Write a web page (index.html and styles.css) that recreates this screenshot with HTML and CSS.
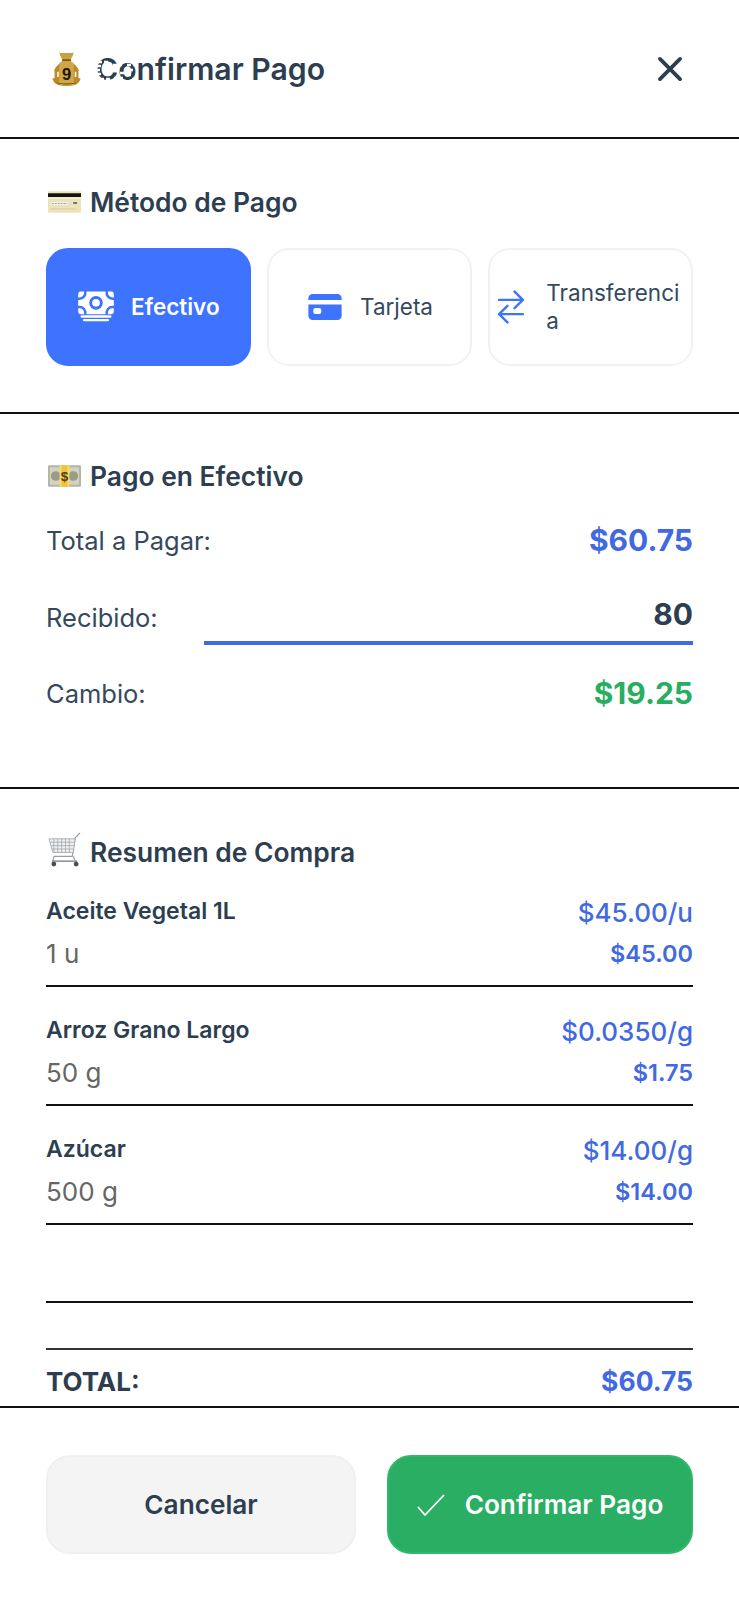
FILE: index.html
```html
<!DOCTYPE html>
<html lang="es">
<head>
    <meta charset="UTF-8">
    <meta name="viewport" content="width=device-width, initial-scale=1.0">
    <title>Confirmar Pago</title>
    <link rel="stylesheet" href="styles.css">
</head>
<body>

    <div class="modal">

        <header class="modal-header">
            <div class="header-title">
                <svg class="bag-emoji" viewBox="0 0 28 34">
                    <path d="M7 1c2 1 4 .4 7 .6 3-.2 5 .4 7-.6-.3 2.500-2 4.500-3 7.500h-8C9 5.500 7.300 3.500 7 1z" fill="#c9a042"/>
                    <path d="M10 7.500h8l.6 2h-9.200z" fill="#7d5a1c"/>
                    <path d="M10 9.500C4.500 13 .5 19 .5 25c0 6 5 8.500 13.500 8.500S27.500 31 27.500 25c0-6-4-12-9.500-15.500z" fill="#bb8a27"/>
                    <path d="M14 10v23" stroke="#e6c565" stroke-width="14" opacity=".5"/>
                    <path d="M4 30c3 2.500 17 2.500 20 0-3 1-17 1-20 0z" fill="#80591a"/>
                    <path d="M0 19h2.500v7H0zM5 20l1.500-.5v5L5 25zM25.500 19H28v7h-2.500zM22 20l1.500-.5v5L22 25z" fill="#fff"/>
                    <text class="bag-sign" x="14" y="28">9</text>
                </svg>
                <h2 class="modal-title">Confirmar Pago<svg class="title-glitch" viewBox="0 0 48 30"><path d="M2 7h11M1 11h5M0 15h4M1 19h5M4 24h11M17 10h9M18 14h3M24 18h4M18 23h9M31 10h8M33 15h5M31 20h4M36 24h5" stroke="#fff" stroke-width="2.500" stroke-dasharray="4 2" fill="none"/></svg></h2>
            </div>
            <svg class="close-icon" viewBox="0 0 512 512">
                <path d="M368 368L144 144M368 144L144 368" fill="none" stroke="currentColor" stroke-linecap="round" stroke-linejoin="round" stroke-width="42"/>
            </svg>
        </header>

        <section class="section method-section">
            <h3 class="section-title">
                <svg class="emoji" viewBox="0 0 34 22">
                    <rect width="34" height="22" fill="#eae3bb"/>
                    <rect y="2" width="34" height="4" fill="#15130c"/>
                    <rect y="6" width="34" height="2" fill="#f6f1d6"/>
                    <rect x="3" y="11" width="18" height="3" fill="#f7f5e8"/>
                    <path d="M4 12.500h16" stroke="#999" stroke-width="1" stroke-dasharray="2 1"/>
                    <rect x="26" y="11" width="4" height="2" fill="#77735e"/>
                    <path d="M3 18h26" stroke="#d8cf9f" stroke-width="1"/>
                </svg>
                Método de Pago
            </h3>
            <div class="method-list">
                <div class="method-card active">
                    <svg class="method-icon" viewBox="0 0 512 512" fill="currentColor">
                        <path fill-rule="evenodd" d="M448 400H64a16 16 0 010-32h384a16 16 0 010 32zM416 448H96a16 16 0 010-32h320a16 16 0 010 32zM32 272H16v48a32 32 0 0032 32h48v-16a64 64 0 00-64-64zM480 272a64 64 0 00-64 64v16h48a32 32 0 0032-32v-48zM464 48h-48v16a64 64 0 0064 64h16V80a32 32 0 00-32-32zM96 48H48a32 32 0 00-32 32v48h16a64 64 0 0064-64zM16 160h16a96 96 0 0096-112h256a96 96 0 0096 112h16v80h-16a96 96 0 00-96 112H128a96 96 0 00-96-112H16zM256 108a92 92 0 100 184 92 92 0 000-184z"/>
                        <circle cx="256" cy="200" r="52"/>
                    </svg>
                    <span class="method-name">Efectivo</span>
                </div>
                <div class="method-card">
                    <svg class="method-icon" viewBox="0 0 512 512" fill="currentColor">
                        <path d="M32 376a56 56 0 0056 56h336a56 56 0 0056-56V222H32zm66-76a30 30 0 0130-30h48a30 30 0 0130 30v20a30 30 0 01-30 30h-48a30 30 0 01-30-30zM424 80H88a56 56 0 00-56 56v26h448v-26a56 56 0 00-56-56z"/>
                    </svg>
                    <span class="method-name">Tarjeta</span>
                </div>
                <div class="method-card">
                    <svg class="method-icon" viewBox="0 0 512 512">
                        <path d="M304 48l112 112-112 112M398.870 160H96M208 464L96 352l112-112M114 352h302" fill="none" stroke="currentColor" stroke-linecap="round" stroke-linejoin="round" stroke-width="32"/>
                    </svg>
                    <span class="method-name">Transferencia</span>
                </div>
            </div>
        </section>

        <section class="section cash-section">
            <h3 class="section-title">
                <svg class="emoji" viewBox="0 0 34 22">
                    <rect width="34" height="22" rx="1" fill="#b4b5a4"/>
                    <rect x="2" y="2" width="30" height="18" fill="#d2d3c2"/>
                    <circle cx="8" cy="11" r="5" fill="#9a9c86"/>
                    <circle cx="26" cy="11" r="5" fill="#9a9c86"/>
                    <rect x="12" width="10" height="22" fill="#f7dc68"/>
                    <rect x="14" width="6" height="22" fill="#efc23c"/>
                    <text class="bill-sign" x="17" y="16">$</text>
                </svg>
                Pago en Efectivo
            </h3>
            <div class="cash-row">
                <span class="cash-label">Total a Pagar:</span>
                <span class="cash-amount">$60.75</span>
            </div>
            <div class="cash-row received-row">
                <span class="cash-label">Recibido:</span>
                <input class="received-input" type="text" value="80">
            </div>
            <div class="cash-row">
                <span class="cash-label">Cambio:</span>
                <span class="cash-amount change">$19.25</span>
            </div>
        </section>

        <section class="section summary-section">
            <h3 class="section-title summary-title">
                <svg class="emoji cart-emoji" viewBox="0 0 34 36" fill="none" stroke="#9a9ea2">
                    <path d="M33 1l-5 5-3 19H6" stroke-width="1.200"/>
                    <path d="M1 7h27l-2 14H5z" fill="#eef0f1" stroke-width=".8"/>
                    <path d="M6 7v14M10 7v14M14 7v14M18 7v14M22 7v14M2 10.500h25M3 14h24M4 17.500h22" stroke-width=".7"/>
                    <path d="M4 30h26" stroke="#85888b" stroke-width="1.500"/>
                    <path d="M6 25l-1 5M26 25l2 5" stroke-width="1.200"/>
                    <circle cx="6" cy="33" r="2.500" fill="#4a4c4e" stroke="none"/>
                    <circle cx="29" cy="33" r="2.500" fill="#4a4c4e" stroke="none"/>
                </svg>
                Resumen de Compra
            </h3>
            <div class="summary-item">
                <div class="item-top"><span class="item-name">Aceite Vegetal 1L</span><span class="item-price">$45.00/u</span></div>
                <div class="item-bottom"><span class="item-qty">1 u</span><span class="item-subtotal">$45.00</span></div>
            </div>
            <div class="summary-item">
                <div class="item-top"><span class="item-name">Arroz Grano Largo</span><span class="item-price">$0.0350/g</span></div>
                <div class="item-bottom"><span class="item-qty">50 g</span><span class="item-subtotal">$1.75</span></div>
            </div>
            <div class="summary-item">
                <div class="item-top"><span class="item-name">Azúcar</span><span class="item-price">$14.00/g</span></div>
                <div class="item-bottom"><span class="item-qty">500 g</span><span class="item-subtotal">$14.00</span></div>
            </div>
            <div class="summary-item empty"></div>
            <div class="summary-total">
                <span class="total-label">TOTAL:</span>
                <span class="total-amount">$60.75</span>
            </div>
        </section>

        <footer class="modal-footer">
            <button class="btn btn-cancel">Cancelar</button>
            <button class="btn btn-confirm">
                <svg class="check-icon" viewBox="0 0 28 22"><path d="M1 13l7 8L27 1" fill="none" stroke="currentColor" stroke-width="1.800"/></svg>
                Confirmar Pago
            </button>
        </footer>

    </div>

</body>
</html>
```

FILE: styles.css
```css
* {
    box-sizing: border-box;
}
body {
    margin: 0;
    font-family: Inter, "Noto Sans", sans-serif;
    background-color: #fff;
    color: #2c3e50;
}
.modal {
    width: 739px;
    height: 1600px;
    overflow: hidden;
    display: flex;
    flex-direction: column;
}
.modal-header {
    height: 139px;
    flex-shrink: 0;
    padding: 0 46px 0 52px;
    display: flex;
    justify-content: space-between;
    align-items: center;
    border-bottom: 2px solid #111;
}
.header-title {
    display: flex;
    align-items: center;
    gap: 15px;
}
.bag-emoji {
    width: 29px;
    height: 36px;
}
.modal-title {
    position: relative;
    margin: 0;
    font-size: 30.2px;
    font-weight: 600;
}
.title-glitch {
    position: absolute;
    left: 0;
    top: 4px;
    width: 48px;
    height: 30px;
}
.close-icon {
    width: 46px;
    height: 46px;
}
.section {
    flex-shrink: 0;
    padding: 45px 46px 0;
    border-bottom: 2px solid #111;
}
.section-title {
    margin: 0;
    height: 34px;
    display: flex;
    align-items: center;
    gap: 9px;
    font-size: 26.4px;
    font-weight: 600;
}
.emoji {
    width: 33px;
    height: 22px;
    margin-left: 2px;
}
.method-section {
    height: 275px;
    padding-top: 46px;
}
.method-list {
    display: flex;
    gap: 16.5px;
    margin-top: 29px;
}
.method-card {
    flex: 1 1 0;
    min-width: 0;
    height: 118px;
    padding: 0 2px;
    display: flex;
    align-items: center;
    justify-content: center;
    gap: 16px;
    border: 2px solid #f1f2f4;
    border-radius: 22px;
    color: #3d73ff;
}
.method-card.active {
    background-color: #3d73ff;
    border-color: #3d73ff;
    color: #fff;
}
.method-icon {
    width: 38px;
    height: 38px;
    flex-shrink: 0;
}
.method-name {
    min-width: 0;
    overflow-wrap: anywhere;
    font-size: 22.5px;
    line-height: 28px;
    color: #34495e;
}
.method-card.active .method-name {
    font-weight: 600;
    color: #fff;
}
.cash-section {
    height: 375px;
}
.cash-row {
    display: flex;
    justify-content: space-between;
    align-items: center;
    height: 50px;
    margin-top: 25px;
}
.cash-section .section-title + .cash-row {
    margin-top: 22px;
}
.received-row {
    height: 55px;
    gap: 46px;
}
.received-row + .cash-row {
    margin-top: 23px;
}
.cash-label {
    font-size: 25.5px;
    color: #34495e;
    white-space: nowrap;
}
.cash-amount {
    font-size: 30px;
    font-weight: 700;
    color: #4169e1;
}
.cash-amount.change {
    color: #27ae60;
}
.received-input {
    flex: 1;
    min-width: 0;
    height: 55px;
    padding: 0 0 3px;
    border: none;
    border-bottom: 4px solid #4169e1;
    border-radius: 0;
    outline: none;
    background: none;
    text-align: right;
    font-family: inherit;
    font-size: 30px;
    font-weight: 700;
    color: #2c3e50;
}
.summary-section {
    height: 619px;
    padding-top: 46px;
}
.summary-title {
    margin-bottom: -1px;
}
.cart-emoji {
    height: 35px;
    margin-top: -6px;
}
.summary-item {
    height: 119px;
    padding-top: 26px;
    border-bottom: 2px solid #111;
}
.summary-item.empty {
    height: 78px;
    padding: 0;
}
.item-top,
.item-bottom,
.summary-total {
    display: flex;
    justify-content: space-between;
    align-items: center;
}
.item-top {
    height: 34px;
}
.item-bottom {
    height: 40px;
    margin-top: 5px;
}
.item-name {
    font-size: 23px;
    font-weight: 600;
}
.item-price {
    margin-top: 3px;
    font-size: 26px;
    font-weight: 500;
    color: #4169e1;
}
.item-qty {
    font-size: 26px;
    color: #666;
}
.item-subtotal {
    font-size: 23.5px;
    font-weight: 600;
    color: #4169e1;
}
.summary-total {
    margin-top: 45px;
    height: 58px;
    padding-top: 6px;
    border-top: 2px solid #333;
}
.total-label {
    font-size: 26px;
    font-weight: 700;
}
.total-amount {
    font-size: 26.5px;
    font-weight: 700;
    color: #4169e1;
}
.modal-footer {
    height: 192px;
    flex-shrink: 0;
    padding: 47px 46px 0;
    display: grid;
    grid-template-columns: 310px 1fr;
    grid-template-rows: 99px;
    gap: 31px;
}
.btn {
    display: flex;
    align-items: center;
    justify-content: center;
    gap: 20px;
    font-family: inherit;
    font-size: 26.2px;
    font-weight: 600;
    border-radius: 24px;
}
.btn-cancel {
    background-color: #f4f4f5;
    border: 2px solid #f0f0f1;
    color: #2c3e50;
}
.btn-confirm {
    background-color: #2aae63;
    border: 2px solid #2fb86a;
    color: #fff;
}
.check-icon {
    width: 28px;
    height: 22px;
}
.bag-sign {
    font-family: "Liberation Sans", sans-serif;
    font-size: 16px;
    font-weight: 700;
    text-anchor: middle;
    fill: #1f1606;
}
.bill-sign {
    font-family: "Liberation Sans", sans-serif;
    font-size: 14px;
    font-weight: 700;
    text-anchor: middle;
    fill: #4a4015;
}
```
